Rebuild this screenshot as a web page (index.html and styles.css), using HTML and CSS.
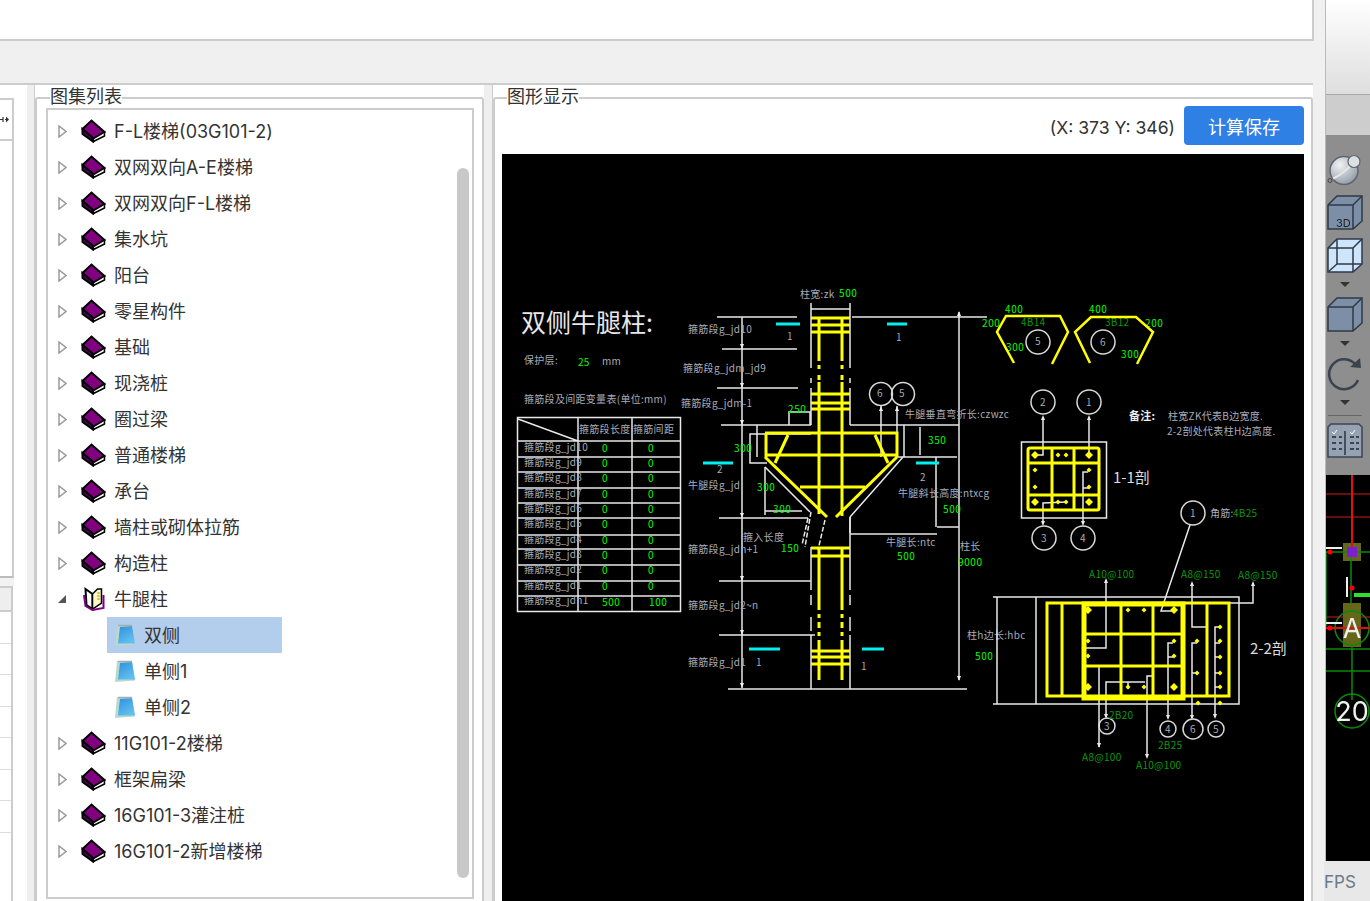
FILE: index.html
```html
<!DOCTYPE html>
<html lang="zh-CN">

<head>
    <meta charset="UTF-8">
    <title>图集列表</title>
    <link rel="stylesheet" href="styles.css">
</head>

<body>
    <svg class="defs">
        <defs>
            <symbol id="arrow" viewBox="0 0 9 13">
                <path d="M1 1 8 6.500 1 12z" fill="#fff" stroke="#9a9a9a" stroke-width="1.500" />
            </symbol>
            <symbol id="book" viewBox="0 0 25 24">
                <path d="M1.500 10 10.500 1.500 23.500 13 12.500 19.500z" fill="#800080" stroke="#000" stroke-width="2" />
                <path d="M1.500 10v5l10.500 7.500.5-3z" fill="#50005a" stroke="#000" stroke-width="2" />
                <path d="M12.500 19.500l11-6.500v4l-11 5.500z" fill="#fff" stroke="#000" stroke-width="1.500" />
            </symbol>
            <symbol id="bookopen" viewBox="0 0 22 24">
                <path d="M3 2 10 7v15L4 18z" fill="#fff" stroke="#000" stroke-width="2" />
                <path d="M10 7 15 2h4v14l-9 6z" fill="#fff8c8" stroke="#000" stroke-width="1.500" />
                <path d="M1.500 8 3 19l7 4 11-2V8" fill="none" stroke="#800080" stroke-width="2" />
                <path d="M16 5v9" stroke="#d8c040" stroke-width="2.500" stroke-dasharray="2 1" />
            </symbol>
            <linearGradient id="sheetfill" x1="0" y1="0" x2="0.600" y2="1">
                <stop offset="0" stop-color="#2f8fdc" />
                <stop offset="1" stop-color="#62c0ee" />
            </linearGradient>
            <symbol id="sheet" viewBox="0 0 22 23">
                <path d="M1 22 3 1l15 .500 3 19z" fill="#b8d8d0" />
                <path d="M4 19.500 6 3l12-1 3 17.500z" fill="url(#sheetfill)" />
                <path d="M4 1.500h14" stroke="#a0aeb4" stroke-width="1.500" />
            </symbol>
            <radialGradient id="ball" cx="0.350" cy="0.300" r="0.800">
                <stop offset="0" stop-color="#f2f2f2" />
                <stop offset="1" stop-color="#8b96a3" />
            </radialGradient>
        </defs>
    </svg>

    <div class="app">
        <div class="main">
            <div class="top_panel"></div>
            <div class="band"></div>
            <div class="content">
                <div class="stub">
                    <div class="stub_box">
                        <div class="stub_head">
                            <svg class="stub_glyph" viewBox="0 0 9 7">
                                <path d="M0 3.500h3M3 1v5M6 3.500h-1" stroke="#333" stroke-width="1.200" />
                                <path d="M6 .500 9 3.500 6 6.500z" fill="#333" />
                            </svg>
                        </div>
                    </div>
                    <div class="stub_gap"></div>
                    <div class="stub_table">
                        <div class="stub_thead"></div>
                        <div class="stub_row"></div>
                        <div class="stub_row"></div>
                        <div class="stub_row"></div>
                        <div class="stub_row"></div>
                        <div class="stub_row"></div>
                        <div class="stub_row"></div>
                        <div class="stub_row"></div>
                    </div>
                </div>
                <div class="strip"></div>

                <fieldset class="group group_list">
                    <legend>图集列表</legend>
                    <div class="tree_box">
                        <ul class="tree">
                            <li><svg class="arrow"><use href="#arrow" /></svg><svg class="ico_book"><use href="#book" /></svg>F-L楼梯(03G101-2)</li>
                            <li><svg class="arrow"><use href="#arrow" /></svg><svg class="ico_book"><use href="#book" /></svg>双网双向A-E楼梯</li>
                            <li><svg class="arrow"><use href="#arrow" /></svg><svg class="ico_book"><use href="#book" /></svg>双网双向F-L楼梯</li>
                            <li><svg class="arrow"><use href="#arrow" /></svg><svg class="ico_book"><use href="#book" /></svg>集水坑</li>
                            <li><svg class="arrow"><use href="#arrow" /></svg><svg class="ico_book"><use href="#book" /></svg>阳台</li>
                            <li><svg class="arrow"><use href="#arrow" /></svg><svg class="ico_book"><use href="#book" /></svg>零星构件</li>
                            <li><svg class="arrow"><use href="#arrow" /></svg><svg class="ico_book"><use href="#book" /></svg>基础</li>
                            <li><svg class="arrow"><use href="#arrow" /></svg><svg class="ico_book"><use href="#book" /></svg>现浇桩</li>
                            <li><svg class="arrow"><use href="#arrow" /></svg><svg class="ico_book"><use href="#book" /></svg>圈过梁</li>
                            <li><svg class="arrow"><use href="#arrow" /></svg><svg class="ico_book"><use href="#book" /></svg>普通楼梯</li>
                            <li><svg class="arrow"><use href="#arrow" /></svg><svg class="ico_book"><use href="#book" /></svg>承台</li>
                            <li><svg class="arrow"><use href="#arrow" /></svg><svg class="ico_book"><use href="#book" /></svg>墙柱或砌体拉筋</li>
                            <li><svg class="arrow"><use href="#arrow" /></svg><svg class="ico_book"><use href="#book" /></svg>构造柱</li>
                            <li><i class="arrow_open"></i><svg class="ico_book"><use href="#bookopen" /></svg>牛腿柱</li>
                            <li class="child selected"><svg class="ico_sheet"><use href="#sheet" /></svg>双侧</li>
                            <li class="child"><svg class="ico_sheet"><use href="#sheet" /></svg>单侧1</li>
                            <li class="child"><svg class="ico_sheet"><use href="#sheet" /></svg>单侧2</li>
                            <li><svg class="arrow"><use href="#arrow" /></svg><svg class="ico_book"><use href="#book" /></svg>11G101-2楼梯</li>
                            <li><svg class="arrow"><use href="#arrow" /></svg><svg class="ico_book"><use href="#book" /></svg>框架扁梁</li>
                            <li><svg class="arrow"><use href="#arrow" /></svg><svg class="ico_book"><use href="#book" /></svg>16G101-3灌注桩</li>
                            <li><svg class="arrow"><use href="#arrow" /></svg><svg class="ico_book"><use href="#book" /></svg>16G101-2新增楼梯</li>
                        </ul>
                        <div class="scroll_thumb"></div>
                    </div>
                </fieldset>
                <div class="strip strip_wide"></div>

                <fieldset class="group group_view">
                    <legend>图形显示</legend>
                    <div class="view_head">
                        <span class="coords">(X: 373 Y: 346)</span>
                        <button class="save">计算保存</button>
                    </div>
                    <svg class="cad" viewBox="502 154 802 760">
                        <defs>
                            <path id="dot" d="M0-2.500 2.500 0 0 2.500-2.500 0z" />
                            <path id="dotb" d="M0-4 4 0 0 4-4 0z" />
                            <path id="tip" d="M0 0 2 5H-2z" />
                            <path id="tipd" d="M0 0 2-5H-2z" />
                        </defs>

                        <!-- left table -->
                        <text class="cad_title" x="521" y="332">双侧牛腿柱:</text>
                        <text class="cad_t" x="524" y="364">保护层:</text>
                        <text class="cad_n" x="578" y="366">25</text>
                        <text class="cad_t" x="602" y="365">mm</text>
                        <text class="cad_t" x="524" y="403">箍筋段及间距变量表(单位:mm)</text>
                        <g class="w">
                            <rect x="517.500" y="417.500" width="163" height="194" />
                            <path d="M578 418v193M632 418v193M517 441h164M517 457h164M517 472h164M517 488h164M517 503h164M517 518h164M517 535h164M517 549h164M517 565h164M517 581h164M517 596h164M518 419l60 22" />
                        </g>
                        <text class="cad_t" x="579" y="433">箍筋段长度</text>
                        <text class="cad_t" x="633" y="433">箍筋间距</text>
                        <g class="cad_t">
                            <text x="524" y="451">箍筋段g_jd10</text>
                            <text x="524" y="466">箍筋段g_jd9</text>
                            <text x="524" y="481">箍筋段g_jd8</text>
                            <text x="524" y="497">箍筋段g_jd7</text>
                            <text x="524" y="512">箍筋段g_jd6</text>
                            <text x="524" y="527">箍筋段g_jd5</text>
                            <text x="524" y="543">箍筋段g_jd4</text>
                            <text x="524" y="558">箍筋段g_jd3</text>
                            <text x="524" y="573">箍筋段g_jd2</text>
                            <text x="524" y="589">箍筋段g_jd1</text>
                            <text x="524" y="604">箍筋段g_jdn1</text>
                        </g>
                        <g class="cad_n">
                            <text x="602" y="452">0</text><text x="648" y="452">0</text>
                            <text x="602" y="467">0</text><text x="648" y="467">0</text>
                            <text x="602" y="482">0</text><text x="648" y="482">0</text>
                            <text x="602" y="498">0</text><text x="648" y="498">0</text>
                            <text x="602" y="513">0</text><text x="648" y="513">0</text>
                            <text x="602" y="528">0</text><text x="648" y="528">0</text>
                            <text x="602" y="544">0</text><text x="648" y="544">0</text>
                            <text x="602" y="559">0</text><text x="648" y="559">0</text>
                            <text x="602" y="574">0</text><text x="648" y="574">0</text>
                            <text x="602" y="590">0</text><text x="648" y="590">0</text>
                            <text x="602" y="606">500</text><text x="649" y="606">100</text>
                        </g>

                        <!-- elevation: white outlines -->
                        <g class="w">
                            <path d="M811 303v65M811 378v5M811 388v37M850 303v65M850 378v5M850 388v37M811 309h39" />
                            <path d="M811 547v43M811 595v10M811 617v14M811 635v54M850 517v73M850 595v10M850 617v14M850 635v54" />
                            <path d="M717 317h80M852 317h135M722 349h75M717 388h81M721 425h90M850 425h109M719 518h89M719 581h92M719 635h96M728 689h239" />
                            <path d="M742 317v371M959 312v368" />
                            <path d="M811 434h-61v29h17M757 425v32M904 425v32M897 457h60" />
                            <path d="M765 467l45 45M903 457l-53 60M850 517v16" />
                            <path d="M920 427v28M936 457v70M937 527h22M850 534h87" />
                            <path d="M789 425v-13h21v13M765 467v48M765 511h37" />
                            <path d="M881 406v51M897 406v51" />
                            <path d="M811 512l-6 35M808 518l-6 27M825 520l-7 30" stroke-dasharray="5 2" />
                        </g>
                        <g class="tips">
                            <use href="#tip" x="881" y="406" />
                            <use href="#tip" x="897" y="406" />
                            <use href="#tip" x="959" y="311" />
                            <use href="#tipd" x="959" y="681" />
                            <use href="#tipd" x="742" y="349" />
                            <use href="#tipd" x="742" y="388" />
                            <use href="#tipd" x="742" y="425" />
                            <use href="#tipd" x="742" y="518" />
                            <use href="#tipd" x="742" y="581" />
                            <use href="#tipd" x="742" y="635" />
                            <use href="#tipd" x="742" y="688" />
                            <use href="#tip" x="1043" y="415" />
                            <use href="#tip" x="1089" y="415" />
                            <use href="#tipd" x="1043" y="526" />
                            <use href="#tipd" x="1083" y="526" />
                            <use href="#tipd" x="1099" y="748" />
                            <use href="#tipd" x="1147" y="759" />
                            <use href="#tipd" x="1106" y="719" />
                            <use href="#tipd" x="1168" y="720" />
                            <use href="#tipd" x="1192" y="720" />
                            <use href="#tipd" x="1215" y="719" />
                            <use href="#tip" x="1106" y="578" />
                            <use href="#tip" x="1192" y="581" />
                            <use href="#tip" x="1253" y="581" />
                        </g>
                        <g class="w_c">
                            <circle cx="881" cy="394" r="11.500" />
                            <circle cx="903" cy="394" r="11.500" />
                            <circle cx="1038" cy="342" r="12" />
                            <circle cx="1103" cy="342" r="12" />
                            <circle cx="1043" cy="402" r="12" />
                            <circle cx="1089" cy="402" r="12" />
                            <circle cx="1044" cy="538" r="12" />
                            <circle cx="1083" cy="538" r="12" />
                            <circle cx="1193" cy="513" r="12" />
                            <circle cx="1107" cy="726" r="8" />
                            <circle cx="1168" cy="729" r="8" />
                            <circle cx="1193" cy="729" r="10" />
                            <circle cx="1216" cy="729" r="8" />
                        </g>

                        <!-- elevation: yellow rebar -->
                        <g class="y">
                            <path d="M819 317v44M819 365v4M819 375v5M819 382v132M819 548v62M819 614v4M819 622v6M819 632v4M819 640v40" />
                            <path d="M842 317v44M842 365v4M842 375v5M842 382v134M842 548v62M842 614v4M842 622v6M842 632v4M842 640v40" />
                            <path d="M811 318h39M811 325h39M811 332h39M811 394h39M811 403h39M811 409h39M811 548h39M811 556h39M811 651h39M811 657h39M811 664h39" />
                            <path d="M765 433h132v24M766 433v24M765 455h132M765 457l62 60M897 457l-61 60M800 487h65M788 435l-13 28M875 435l13 28" />
                        </g>
                        <g class="c">
                            <path d="M776 324h24M887 324h20M703 463h30M916 463h23M749 649h31M862 649h22" />
                        </g>

                        <g class="cad_t">
                            <text x="800" y="298">柱宽:zk</text>
                            <text x="688" y="333">箍筋段g_jd10</text>
                            <text x="683" y="372">箍筋段g_jdm_jd9</text>
                            <text x="681" y="407">箍筋段g_jdm-1</text>
                            <text x="688" y="489">牛腿段g_jd</text>
                            <text x="743" y="541">箍入长度</text>
                            <text x="688" y="553">箍筋段g_jdn+1</text>
                            <text x="688" y="609">箍筋段g_jd2~n</text>
                            <text x="688" y="666">箍筋段g_jd1</text>
                            <text x="905" y="418">牛腿垂直弯折长:czwzc</text>
                            <text x="898" y="497">牛腿斜长高度:ntxcg</text>
                            <text x="886" y="546">牛腿长:ntc</text>
                            <text x="960" y="550">柱长</text>
                            <text x="967" y="639">柱h边长:hbc</text>
                            <text x="787" y="340">1</text>
                            <text x="896" y="341">1</text>
                            <text x="717" y="473">2</text>
                            <text x="920" y="481">2</text>
                            <text x="756" y="666">1</text>
                            <text x="861" y="670">1</text>
                            <text x="877" y="397">6</text>
                            <text x="899" y="397">5</text>
                            <text x="1035" y="345">5</text>
                            <text x="1100" y="346">6</text>
                            <text x="1040" y="406">2</text>
                            <text x="1086" y="406">1</text>
                            <text x="1041" y="542">3</text>
                            <text x="1080" y="542">4</text>
                            <text x="1190" y="517">1</text>
                            <text x="1104" y="730">3</text>
                            <text x="1165" y="733">4</text>
                            <text x="1190" y="733">6</text>
                            <text x="1213" y="733">5</text>
                            <text x="1168" y="420">柱宽ZK代表B边宽度.</text>
                            <text x="1167" y="435">2-2剖处代表柱H边高度.</text>
                            <text x="1210" y="517">角筋:</text>
                        </g>
                        <g class="cad_n">
                            <text x="839" y="297">500</text>
                            <text x="788" y="413">250</text>
                            <text x="734" y="452">300</text>
                            <text x="928" y="444">350</text>
                            <text x="757" y="491">300</text>
                            <text x="773" y="513">300</text>
                            <text x="943" y="513">500</text>
                            <text x="781" y="552">150</text>
                            <text x="897" y="560">500</text>
                            <text x="958" y="566">9000</text>
                            <text x="975" y="660">500</text>
                            <text x="1005" y="313">400</text>
                            <text x="982" y="327">200</text>
                            <text x="1006" y="351">300</text>
                            <text x="1089" y="313">400</text>
                            <text x="1145" y="327">200</text>
                            <text x="1121" y="358">300</text>
                        </g>
                        <g class="cad_d">
                            <text x="1021" y="326">4B14</text>
                            <text x="1105" y="326">3B12</text>
                            <text x="1233" y="517">4B25</text>
                            <text x="1089" y="578">A10@100</text>
                            <text x="1181" y="578">A8@150</text>
                            <text x="1238" y="579">A8@150</text>
                            <text x="1109" y="719">2B20</text>
                            <text x="1158" y="749">2B25</text>
                            <text x="1082" y="761">A8@100</text>
                            <text x="1136" y="769">A10@100</text>
                        </g>

                        <!-- stirrups top views -->
                        <g class="y y_thin">
                            <path d="M1014 363 997 332l9-16h54l8 16-16 32" />
                            <path d="M1090 363 1075 332l16-15h45l17 15-16 32" />
                        </g>

                        <!-- section 1-1 -->
                        <g class="w">
                            <rect x="1021.500" y="442" width="85" height="76" />
                            <path d="M1043 417v38h-8M1089 417v36M1083 523v-51h5M1083 488h6M1043 523v-20l24-1" />
                        </g>
                        <g class="y">
                            <rect x="1028" y="448" width="71" height="62" rx="2" />
                            <path d="M1052 448v62M1074 448v62M1028 463h71M1028 495h71" />
                        </g>
                        <g class="dots">
                            <use href="#dotb" x="1035" y="455" />
                            <use href="#dot" x="1058" y="455" />
                            <use href="#dot" x="1066" y="455" />
                            <use href="#dotb" x="1089" y="455" />
                            <use href="#dot" x="1035" y="470" />
                            <use href="#dot" x="1035" y="487" />
                            <use href="#dot" x="1089" y="470" />
                            <use href="#dot" x="1089" y="487" />
                            <use href="#dotb" x="1035" y="502" />
                            <use href="#dot" x="1058" y="502" />
                            <use href="#dot" x="1066" y="502" />
                            <use href="#dotb" x="1089" y="502" />
                        </g>
                        <text class="cad_big" x="1113" y="483">1-1剖</text>
                        <text class="cad_note" x="1129" y="420">备注:</text>

                        <!-- section 2-2 -->
                        <g class="w">
                            <path d="M993 597h246v107H993M1036 597v107M997 597v107" />
                            <path d="M1106 580v68h-23M1192 583v44h14M1253 583v20h-23M1190 525l-29 86h12" />
                            <path d="M1099 667v80M1106 717v-35h39M1128 682v7M1147 757v-81h6" />
                            <path d="M1168 718v-75h5M1168 657h5M1192 718v-75h5M1192 673h5M1215 717v-90h5M1215 643h5M1215 657h5M1215 673h5M1215 687h5" />
                        </g>
                        <g class="y">
                            <rect x="1047" y="603" width="182" height="93" />
                            <path d="M1062 603v93M1207 603v93M1121 605v92M1153 605v92M1084 634h98M1084 666h98" />
                        </g>
                        <rect class="y_thick" x="1084" y="604" width="99" height="94" />
                        <g class="dots">
                            <use href="#dotb" x="1088" y="610" />
                            <use href="#dot" x="1128" y="610" />
                            <use href="#dot" x="1144" y="610" />
                            <use href="#dotb" x="1174" y="610" />
                            <use href="#dot" x="1088" y="641" />
                            <use href="#dot" x="1088" y="656" />
                            <use href="#dotb" x="1088" y="687" />
                            <use href="#dot" x="1128" y="687" />
                            <use href="#dot" x="1144" y="687" />
                            <use href="#dotb" x="1174" y="687" />
                            <use href="#dot" x="1174" y="641" />
                            <use href="#dot" x="1174" y="656" />
                            <use href="#dot" x="1197" y="641" />
                            <use href="#dot" x="1197" y="673" />
                            <use href="#dot" x="1220" y="627" />
                            <use href="#dot" x="1220" y="641" />
                            <use href="#dot" x="1220" y="657" />
                            <use href="#dot" x="1220" y="673" />
                            <use href="#dot" x="1220" y="687" />
                            <use href="#dot" x="1198" y="703" />
                            <use href="#dot" x="1220" y="703" />
                        </g>
                        <text class="cad_big" x="1250" y="654">2-2剖</text>
                    </svg>
                </fieldset>
            </div>
        </div>

        <div class="side">
            <div class="side_top"></div>
            <div class="side_band"></div>
            <div class="side_tools">
                <svg class="tool tool_sphere" viewBox="0 0 36 34">
                    <circle cx="17" cy="18" r="14" fill="url(#ball)" stroke="#5d6670" stroke-width="1.500" />
                    <path d="M6 26C12 24 24 14 28 8" fill="none" stroke="#e8e8e8" stroke-width="2" />
                    <circle cx="27" cy="9" r="6" fill="#dde0e3" stroke="#5d6670" stroke-width="1.200" />
                    <circle cx="3" cy="28" r="2" fill="none" stroke="#444" />
                </svg>
                <svg class="tool" viewBox="0 0 36 35">
                    <path d="M1 10 10 1h25v25l-9 8H1z" fill="#7d8fa6" stroke="#2e3a48" stroke-width="1.500" />
                    <path d="M1 10h25v24M26 10l9-9" fill="none" stroke="#2e3a48" stroke-width="1.500" />
                    <text class="tool_label" x="9" y="32">3D</text>
                </svg>
                <svg class="tool" viewBox="0 0 36 35">
                    <path d="M1 10 10 1h25v25l-9 8H1z" fill="#cfe5fb" stroke="#2e3a48" stroke-width="1.500" />
                    <path d="M1 10h25v24M26 10l9-9M10 1v25h25M10 26l-9 8" fill="none" stroke="#2e3a48" stroke-width="1.500" />
                </svg>
                <i class="caret"></i>
                <svg class="tool" viewBox="0 0 36 35">
                    <path d="M1 10 10 1h25v25l-9 8H1z" fill="#7d8fa6" stroke="#2e3a48" stroke-width="1.500" />
                    <path d="M1 10h25v24M26 10l9-9" fill="none" stroke="#2e3a48" stroke-width="1.500" />
                </svg>
                <i class="caret"></i>
                <svg class="tool" viewBox="0 0 36 35">
                    <path d="M29 9A15 15 0 1 0 31 24" fill="none" stroke="#3a434d" stroke-width="2.500" />
                    <path d="M23 11 34 12 33 2z" fill="#3a434d" />
                </svg>
                <i class="caret"></i>
                <div class="tool_sep"></div>
                <svg class="tool" viewBox="0 0 36 35">
                    <path d="M1 4 4 1h28l3 3v30H1z" fill="#96a2b2" stroke="#3a4656" stroke-width="1.500" />
                    <path d="M18 8v24" stroke="#2a3340" stroke-width="1.500" />
                    <path d="M5 14h4M5 20h4M5 26h4M23 14h4M23 20h4M23 26h4M12 14h3M12 20h3M12 26h3M29 14h3M29 20h3M29 26h3" stroke="#3a4656" stroke-width="2" />
                    <path d="M5 9l2 2 3-4M23 9l2 2 3-4" fill="none" stroke="#fff" />
                </svg>
            </div>
            <svg class="side_canvas" viewBox="1326 475 44 386">
                <g class="sc_dark_red">
                    <path d="M1326 494h44M1326 517h44M1326 617h44" />
                </g>
                <rect x="1343" y="543" width="18" height="18" fill="#66661a" />
                <rect x="1343" y="603" width="18" height="44" fill="#66661a" />
                <g class="sc_green">
                    <path d="M1326 552h44M1351 552v52M1326 552v74M1326 649h44M1326 671h44M1352 647v53" />
                    <circle cx="1352" cy="628" r="17" />
                    <circle cx="1352" cy="711" r="17" />
                </g>
                <path class="sc_red" d="M1352 475v77M1326 628h44" />
                <path class="sc_bright" d="M1354 595h16" />
                <path class="sc_white" d="M1326 548h16M1347 577v20M1326 623h16" />
                <rect x="1347" y="547" width="10" height="10" fill="#7a20d0" />
                <circle cx="1330" cy="552" r="2.500" fill="#f00" />
                <circle cx="1352" cy="588" r="2.500" fill="#f00" />
                <circle cx="1330" cy="628" r="2.500" fill="#f00" />
                <text class="sc_text" x="1352" y="638">A</text>
                <text class="sc_text" x="1352" y="721">20</text>
            </svg>
            <div class="side_fps">FPS</div>
        </div>
    </div>
</body>

</html>
```

FILE: styles.css
```css
* {
    box-sizing: border-box;
    font-family: "Inter", "Noto Sans CJK SC", sans-serif;
}

html,
body {
    margin: 0;
    height: 100%;
    overflow: hidden;
    background: #fff;
}

.defs {
    position: absolute;
    width: 0;
    height: 0;
}

.app {
    display: flex;
    height: 901px;
    overflow: hidden;
    filter: blur(.35px);
}

.main {
    width: 1326px;
    flex: none;
    display: flex;
    flex-direction: column;
    background: #f0f0f0;
    border-right: 1px solid #bbb;
}

.top_panel {
    height: 41px;
    flex: none;
    margin-right: 11px;
    background: #fff;
    border-right: 2px solid #ccc;
    border-bottom: 2px solid #ccc;
}

.band {
    height: 42px;
    flex: none;
}

.content {
    flex: 1;
    display: flex;
    margin-right: 12px;
    background: #fff;
    border-top: 2px solid #ccc;
    min-height: 0;
}

/* cut off panel on the left */
.stub {
    width: 27px;
    flex: none;
    display: flex;
    flex-direction: column;
    padding-top: 13px;
}

.stub_box {
    width: 14px;
    height: 480px;
    flex: none;
    border-right: 2px solid #ccc;
    border-top: 2px solid #ccc;
    border-bottom: 2px solid #bbb;
}

.stub_head {
    height: 41px;
    display: flex;
    align-items: center;
    border-bottom: 2px solid #ccc;
}

.stub_glyph {
    width: 9px;
    height: 7px;
}

.stub_gap {
    height: 8px;
    flex: none;
    width: 14px;
    background: #f2f2f2;
}

.stub_table {
    width: 13px;
    border-right: 2px solid #ccc;
    flex: 1;
}

.stub_thead {
    height: 26px;
    background: #eee;
    border-top: 2px solid #ccc;
    border-bottom: 2px solid #ccc;
}

.stub_row {
    height: 31.500px;
    border-bottom: 1px solid #ddd;
}

.strip {
    width: 8px;
    flex: none;
    background: #efefef;
    border-right: 1px solid #ccc;
}

.strip_wide {
    width: 9px;
}

/* group boxes */
.group {
    margin: 2px 0 0;
    padding: 0;
    min-width: 0;
    border: 2px solid #ccc;
    border-radius: 3px;
    height: 900px;
}

.group legend {
    margin-left: 4px;
    padding: 1px 0 2px;
    font-size: 18px;
    line-height: 18px;
    color: #333;
}

.group_view legend {
    margin-left: 5px;
}

.group_list {
    width: 449px;
    flex: none;
    padding: 0 8px 0 9px;
}

.group_view {
    flex: 1;
    padding: 0 7px;
}

.tree_box {
    display: flex;
    height: 791px;
    border: 2px solid #ccc;
}

.tree {
    flex: 1;
    list-style: none;
    margin: 0;
    padding: 3px 0 0 7px;
    font-size: 18px;
    color: #333;
}

.tree li {
    height: 36px;
    display: flex;
    align-items: center;
    white-space: nowrap;
    padding-top: 2px;
    line-height: 22px;
}

.arrow {
    width: 9px;
    height: 13px;
    flex: none;
    margin: 0 14px 2px 3px;
}

.arrow_open {
    width: 0;
    height: 0;
    margin: 0 15px 2px 3px;
    border-bottom: 8px solid #555;
    border-left: 8px solid transparent;
}

.ico_book {
    width: 25px;
    height: 24px;
    margin: 0 8px 2px 0;
    flex: none;
}

.tree .child {
    width: 175px;
    margin-left: 52px;
    padding-left: 7px;
}

.tree .selected {
    background: #b3cdec;
}

.ico_sheet {
    width: 22px;
    height: 23px;
    margin: 0 8px 2px 0;
    flex: none;
}

.scroll_thumb {
    width: 12px;
    margin: 58px 3px 19px 0;
    flex: none;
    background: #c8c8c8;
    border-radius: 6px;
}

.view_head {
    display: flex;
    justify-content: flex-end;
    align-items: center;
    gap: 9px;
    height: 39px;
    margin: -2px 0 9px;
}

.coords {
    font-size: 17.600px;
    color: #333;
    padding-top: 4px;
}

.save {
    width: 120px;
    height: 39px;
    border: 0;
    border-radius: 4px;
    background: #2f80e4;
    color: #fff;
    font-size: 18px;
    padding: 0;
}

/* cad drawing */
.cad {
    display: block;
    width: 802px;
    height: 760px;
    background: #000;
}

.cad path,
.cad rect,
.cad circle {
    fill: none;
}

.cad .dots use {
    fill: #ff0;
}

.cad .tips use {
    fill: #eee;
}

.cad #dot,
.cad #dotb,
.cad #tip,
.cad #tipd {
    fill: inherit;
}

.w {
    stroke: #e8e8e8;
    stroke-width: 1.500;
}

.w_c {
    stroke: #d8d8d8;
    stroke-width: 1.500;
}

.y {
    stroke: #ff0;
    stroke-width: 3;
}

.y_thin {
    stroke-width: 2.500;
}

.y_thick {
    stroke: #ff0;
    stroke-width: 5;
}

.c {
    stroke: #00f0f0;
    stroke-width: 3;
}

.cad text {
    font-family: "Noto Sans CJK SC", sans-serif;
    font-size: 10px;
    letter-spacing: .3px;
}

.cad_t,
.cad_t text {
    fill: #a9adb8;
}

.cad_n,
.cad_n text {
    fill: #0f0;
    letter-spacing: .6px;
}

.cad_d text {
    fill: #0a9a0a;
}

.cad .cad_title {
    font-size: 25px;
    letter-spacing: 0;
    fill: #e8e8e8;
}

.cad .cad_big {
    font-size: 15px;
    letter-spacing: 0;
    fill: #ddd;
}

.cad .cad_note {
    font-size: 11px;
    font-weight: 700;
    fill: #eee;
}

/* right hand side toolbar */
.side {
    flex: 1;
    display: flex;
    flex-direction: column;
    min-width: 0;
}

.side_top {
    height: 94px;
    flex: none;
    background: linear-gradient(#fff, #dedede);
}

.side_band {
    height: 41px;
    flex: none;
    background: #cdcdcd;
    border-top: 1px solid #aaa;
}

.side_tools {
    height: 340px;
    flex: none;
    background: #8e8e8e;
    display: flex;
    flex-direction: column;
    align-items: center;
    padding: 17px 8px 0 1px;
}

.tool {
    width: 36px;
    height: 35px;
    flex: none;
    margin-bottom: 8px;
}

.tool_label {
    font-size: 11px;
    fill: #222;
}

.caret {
    width: 0;
    height: 0;
    margin-top: 1px;
    margin-bottom: 10px;
    border-top: 5px solid #333;
    border-left: 5px solid transparent;
    border-right: 5px solid transparent;
}

.tool_sep {
    width: 34px;
    height: 1px;
    flex: none;
    background: #666;
    margin-bottom: 7px;
}

.side_canvas {
    display: block;
    width: 44px;
    height: 386px;
    flex: none;
    background: #000;
}

.sc_dark_red {
    stroke: #8a1010;
    stroke-width: 1.500;
}

.sc_green circle,
.sc_green path {
    fill: none;
    stroke: #0a8a0a;
    stroke-width: 1.500;
}

.sc_red {
    stroke: #e01010;
    stroke-width: 2;
    fill: none;
}

.sc_bright {
    stroke: #2fe02f;
    stroke-width: 4;
}

.sc_white {
    stroke: #eee;
    stroke-width: 2;
    fill: none;
}

.sc_text {
    font-size: 27px;
    fill: #f0f0f0;
    text-anchor: middle;
}

.side_fps {
    flex: 1;
    background: #e8e8e8;
    font-size: 17px;
    color: #6a7a8a;
    padding-top: 11px;
    margin-left: -2px;
}
```
